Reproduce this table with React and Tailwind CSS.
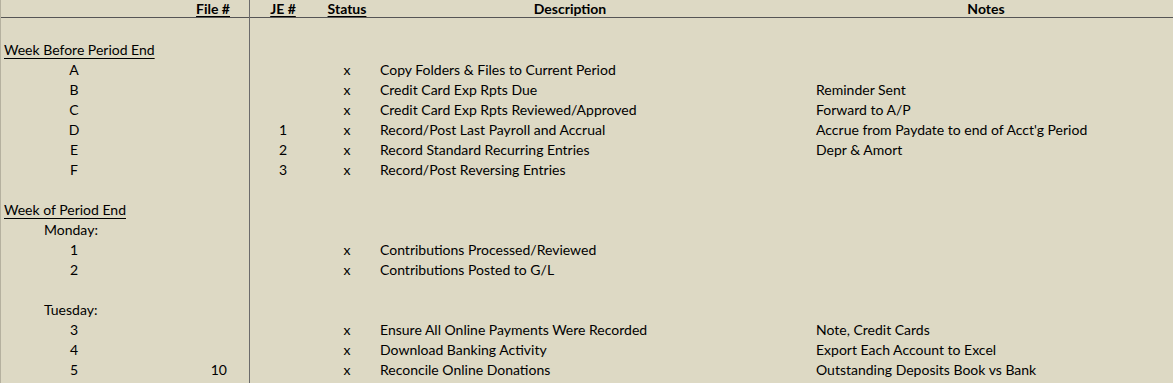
import React from 'react';

const rows = [
  { kind: 'blank' },
  { kind: 'heading', text: 'Week Before Period End' },
  { label: 'A', status: 'x', desc: 'Copy Folders & Files to Current Period' },
  { label: 'B', status: 'x', desc: 'Credit Card Exp Rpts Due', note: 'Reminder Sent' },
  { label: 'C', status: 'x', desc: 'Credit Card Exp Rpts Reviewed/Approved', note: 'Forward to A/P' },
  { label: 'D', je: '1', status: 'x', desc: 'Record/Post Last Payroll and Accrual', note: "Accrue from Paydate to end of Acct'g Period" },
  { label: 'E', je: '2', status: 'x', desc: 'Record Standard Recurring Entries', note: 'Depr & Amort' },
  { label: 'F', je: '3', status: 'x', desc: 'Record/Post Reversing Entries' },
  { kind: 'blank' },
  { kind: 'heading', text: 'Week of Period End' },
  { kind: 'day', text: 'Monday:' },
  { label: '1', status: 'x', desc: 'Contributions Processed/Reviewed' },
  { label: '2', status: 'x', desc: 'Contributions Posted to G/L' },
  { kind: 'blank' },
  { kind: 'day', text: 'Tuesday:' },
  { label: '3', status: 'x', desc: 'Ensure All Online Payments Were Recorded', note: 'Note, Credit Cards' },
  { label: '4', status: 'x', desc: 'Download Banking Activity', note: 'Export Each Account to Excel' },
  { label: '5', file: '10', status: 'x', desc: 'Reconcile Online Donations', note: 'Outstanding Deposits Book vs Bank' },
];

const Row = ({ row }) => {
  const left =
    row.kind === 'heading' ? (
      <div className="w-[249px] shrink-0 pl-[3px] underline underline-offset-[3px] decoration-1 whitespace-nowrap">{row.text}</div>
    ) : row.kind === 'day' ? (
      <div className="w-[249px] shrink-0 pl-[43px] whitespace-nowrap">{row.text}</div>
    ) : (
      <div className="w-[249px] shrink-0 flex">
        <div className="w-[146px] text-center">{row.label}</div>
        <div className="w-[103px] text-right pr-[23px]">{row.file}</div>
      </div>
    );
  return (
    <div className="flex h-[20px] items-end leading-[20px]">
      {left}
      <div className="w-px shrink-0" />
      <div className="w-[64px] shrink-0 text-center">{row.je}</div>
      <div className="w-[64px] shrink-0 text-center">{row.status}</div>
      <div className="w-[436px] shrink-0 pl-[1px] whitespace-nowrap">{row.desc}</div>
      <div className="flex-1 pl-[1px] whitespace-nowrap">{row.note}</div>
    </div>
  );
};

export default function App() {
  return (
    <div
      className="relative min-h-screen bg-[#ddd9c4] text-black text-[14px] border-l border-[#b5b19f] overflow-hidden"
      style={{ fontFamily: 'Lato, "Open Sans", sans-serif' }}
    >
      <div className="absolute top-0 bottom-0 left-[248px] w-px bg-[#6b6b6b]" />
      <div className="flex h-[18px] items-end leading-[17px] font-bold border-b border-[#555555]">
        <div className="w-[249px] shrink-0 text-right pr-[20px]">
          <span className="underline underline-offset-[2px] decoration-1">File #</span>
        </div>
        <div className="w-px shrink-0" />
        <div className="w-[64px] shrink-0 text-center">
          <span className="underline underline-offset-[2px] decoration-1">JE #</span>
        </div>
        <div className="w-[64px] shrink-0 text-center">
          <span className="underline underline-offset-[2px] decoration-1">Status</span>
        </div>
        <div className="w-[382px] shrink-0 text-center">Description</div>
        <div className="w-[450px] shrink-0 text-center">Notes</div>
      </div>
      <div className="pt-[2px]">
        {rows.map((row, i) => (
          <Row key={i} row={row} />
        ))}
      </div>
    </div>
  );
}
